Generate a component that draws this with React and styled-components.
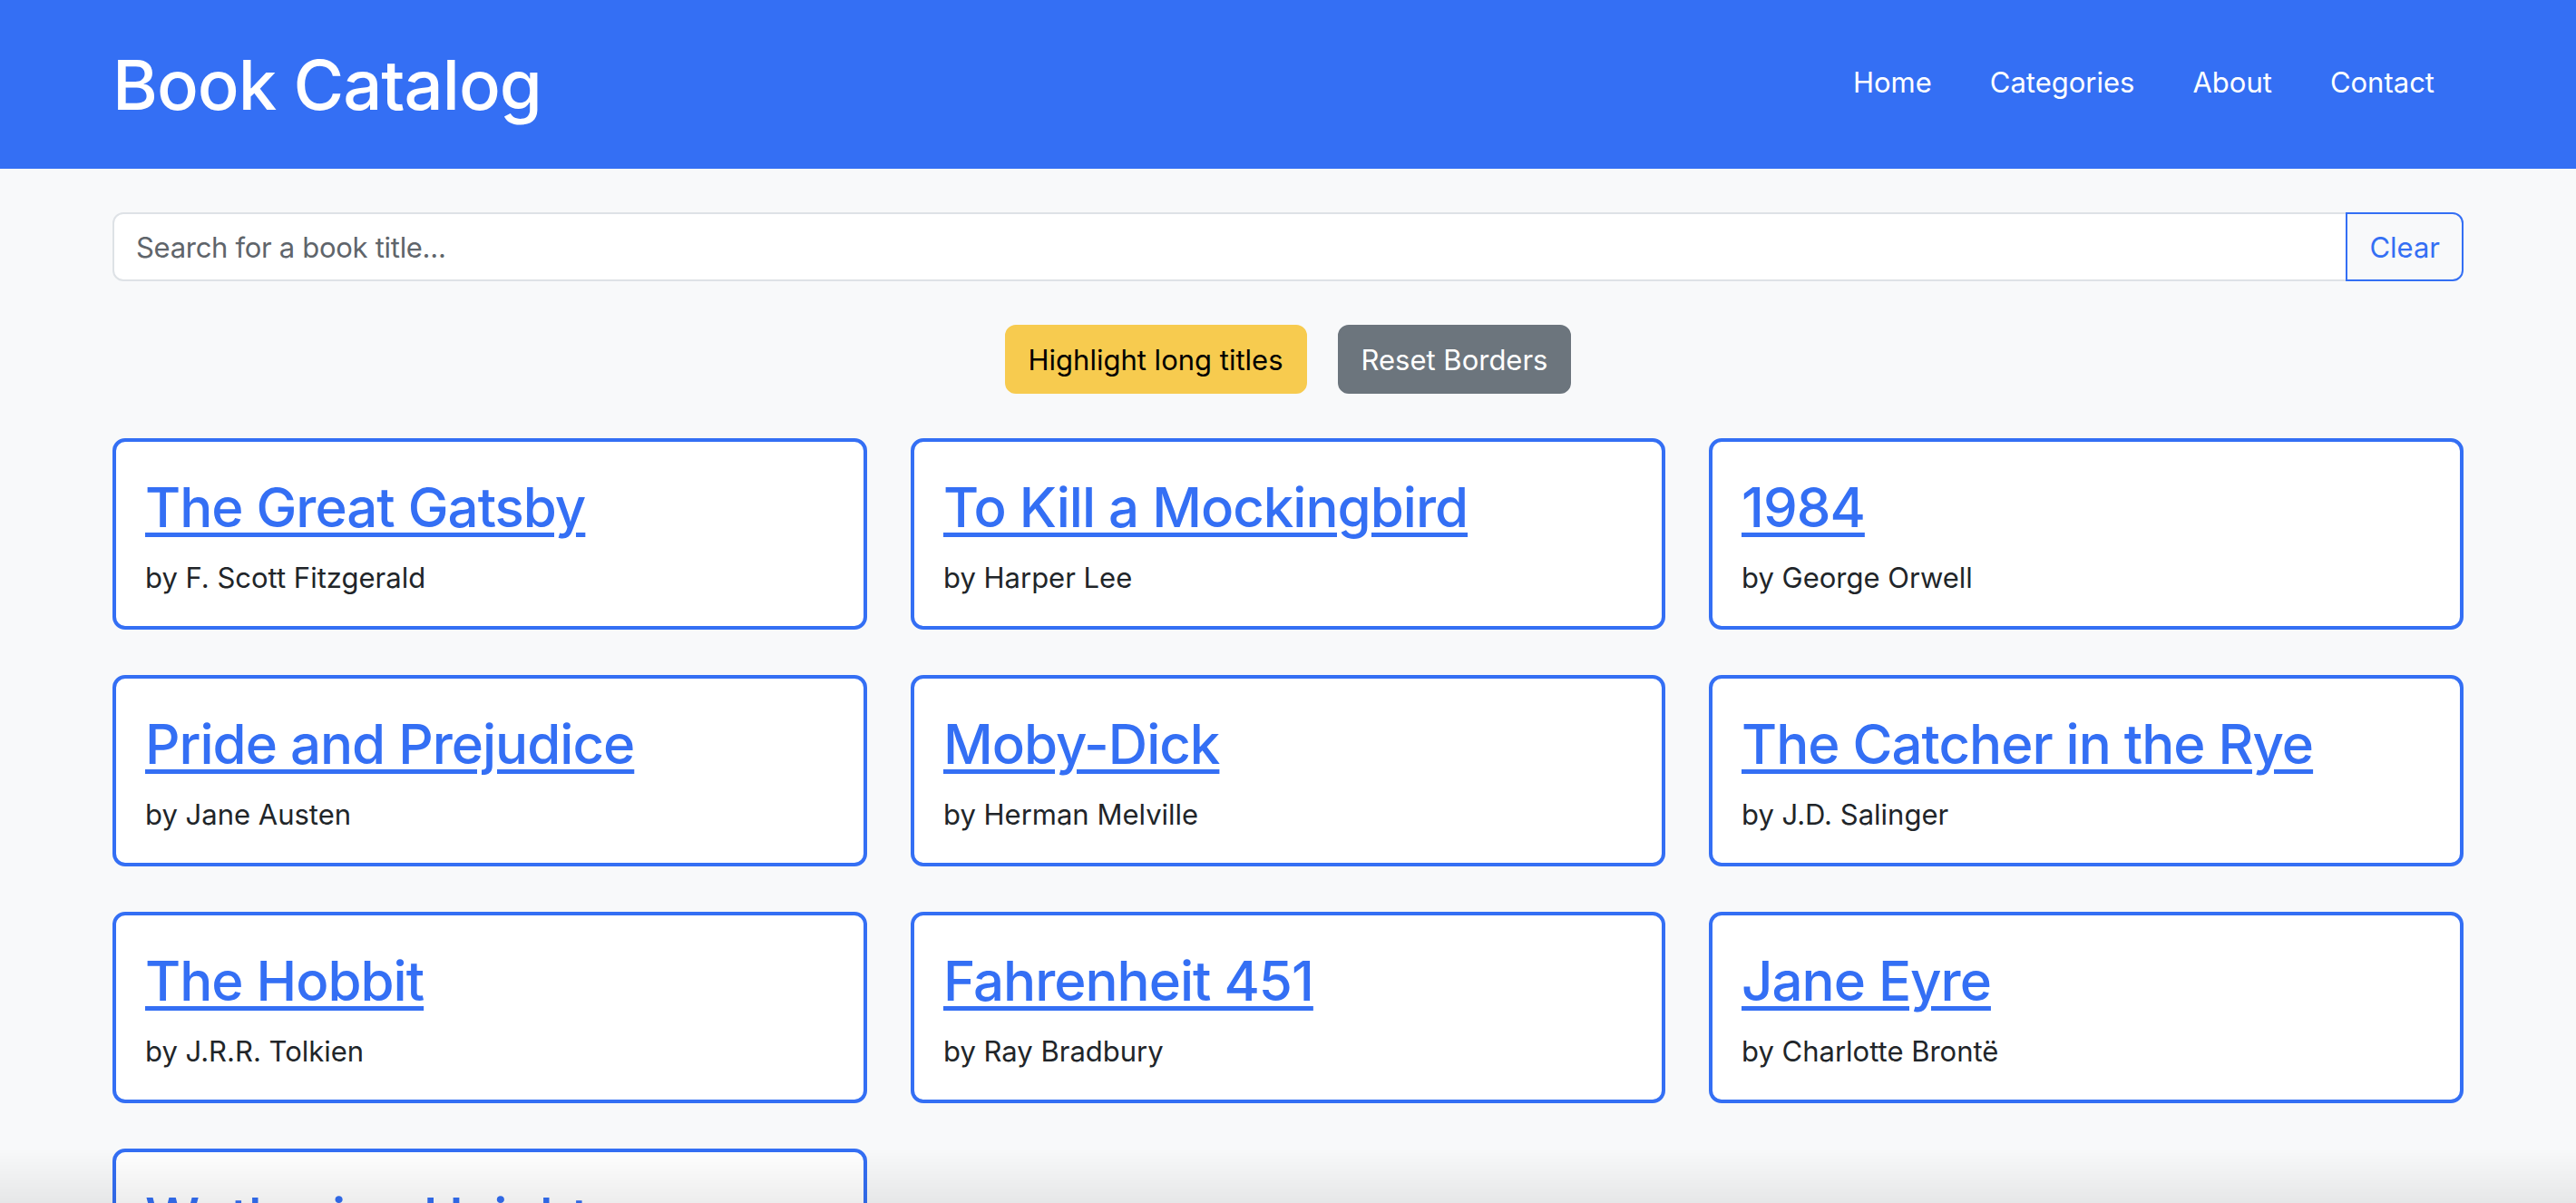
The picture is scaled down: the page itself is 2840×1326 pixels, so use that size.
import React from 'react'
import styled, {createGlobalStyle} from "styled-components"

const books = [
    {title: "The Great Gatsby", author: "F. Scott Fitzgerald"},
    {title: "To Kill a Mockingbird", author: "Harper Lee"},
    {title: "1984", author: "George Orwell"},
    {title: "Pride and Prejudice", author: "Jane Austen"},
    {title: "Moby-Dick", author: "Herman Melville"},
    {title: "The Catcher in the Rye", author: "J.D. Salinger"},
    {title: "The Hobbit", author: "J.R.R. Tolkien"},
    {title: "Fahrenheit 451", author: "Ray Bradbury"},
    {title: "Jane Eyre", author: "Charlotte Brontë"},
    {title: "Wuthering Heights", author: "Emily Brontë"},
]

const App = () => {
    const [search, setSearch] = React.useState("")
    const [highlight, setHighlight] = React.useState(false)

    const shown = books.filter((b) => b.title.toLowerCase().includes(search.toLowerCase()))

    return (
        <>
            <GlobalStyle/>
            <Navbar>
                <NavInner>
                    <Brand>Book Catalog</Brand>
                    <NavList>
                        <NavLink href="#">Home</NavLink>
                        <NavLink href="#">Categories</NavLink>
                        <NavLink href="#">About</NavLink>
                        <NavLink href="#">Contact</NavLink>
                    </NavList>
                </NavInner>
            </Navbar>
            <Main>
                <SearchGroup>
                    <SearchInput placeholder="Search for a book title..."
                    value={search}
                    onChange={(e)=>{
                        setSearch(e.target.value)
                    }}/>
                    <ClearButton onClick={()=>setSearch("")}>Clear</ClearButton>
                </SearchGroup>
                <ButtonRow>
                    <ActionButton bg="#f7cb4f" cl="#000" onClick={()=>setHighlight(true)}>Highlight long titles</ActionButton>
                    <ActionButton bg="#6c757d" cl="#fff" onClick={()=>setHighlight(false)}>Reset Borders</ActionButton>
                </ButtonRow>
                <Grid>
                    {shown.map((b) => (
                        <Card key={b.title} bd={highlight && b.title.length > 15 ? "#dc3545" : "#346ff4"}>
                            <Title><a href="#">{b.title}</a></Title>
                            <Author>by {b.author}</Author>
                        </Card>
                    ))}
                </Grid>
            </Main>
            <WindowShade/>
        </>
    )
}

export default App

const GlobalStyle = createGlobalStyle`
body {
    margin: 0;
    background-color: #f8f9fa;
    font-family: Inter, "Noto Sans", sans-serif;
    color: #212529;
}
* { box-sizing: border-box; }
`

const Navbar = styled.nav`
background-color: #346ff4;
height: 186px;
`
const NavInner = styled.div`
width: 2592px;
height: 100%;
margin: 0 auto;
display: flex;
align-items: center;
justify-content: space-between;
`
const Brand = styled.h1`
margin: 0;
font-size: 76px;
font-weight: 500;
color: white;
letter-spacing: -1px;
`
const NavList = styled.div`
display: flex;
align-items: center;
margin-top: -6px;
`
const NavLink = styled.a`
padding: 0 32px;
font-size: 31px;
color: white;
text-decoration: none;
`
const Main = styled.main`
width: 2592px;
margin: 48px auto 0;
`
const SearchGroup = styled.div`
display: flex;
height: 76px;
`
const SearchInput = styled.input`
flex: 1;
height: 100%;
border: 2px solid #dee2e6;
border-radius: 12px 0 0 12px;
padding: 0 24px;
font-size: 31px;
font-family: inherit;
letter-spacing: -0.3px;
color: #212529;
background-color: white;
outline: none;
&::placeholder { color: #5f656b; }
`
const ClearButton = styled.button`
height: 100%;
margin-left: -2px;
padding: 0 24px;
border: 2px solid #346ff4;
border-radius: 0 12px 12px 0;
background-color: transparent;
color: #346ff4;
font-size: 31px;
font-family: inherit;
cursor: pointer;
`
const ButtonRow = styled.div`
display: flex;
justify-content: center;
gap: 34px;
margin: 48px 0 49px;
`
const ActionButton = styled.button`
height: 76px;
padding: 0 24px;
border: 2px solid ${({bg})=>bg};
border-radius: 12px;
background-color: ${({bg})=>bg};
color: ${({cl})=>cl};
font-size: 31px;
font-family: inherit;
cursor: pointer;
`
const Grid = styled.div`
display: grid;
grid-template-columns: repeat(3, 1fr);
gap: 50px 48px;
`
const Card = styled.div`
background-color: white;
border: 4px solid ${({bd})=>bd};
border-radius: 14px;
padding: 35px 32px 29px;
`
const Title = styled.h2`
margin: 0 0 16px;
font-size: 60px;
line-height: 75px;
font-weight: 500;
letter-spacing: -1px;
a {
    color: #346ff4;
    text-decoration: underline;
    text-decoration-thickness: 5px;
    text-underline-offset: 6px;
}
`
const Author = styled.p`
margin: 0;
font-size: 31px;
line-height: 48px;
color: #212529;
`
const WindowShade = styled.div`
position: fixed;
left: 0;
right: 0;
bottom: 0;
height: 60px;
pointer-events: none;
background: linear-gradient(rgba(0,0,0,0), rgba(0,0,0,0.07));
`
